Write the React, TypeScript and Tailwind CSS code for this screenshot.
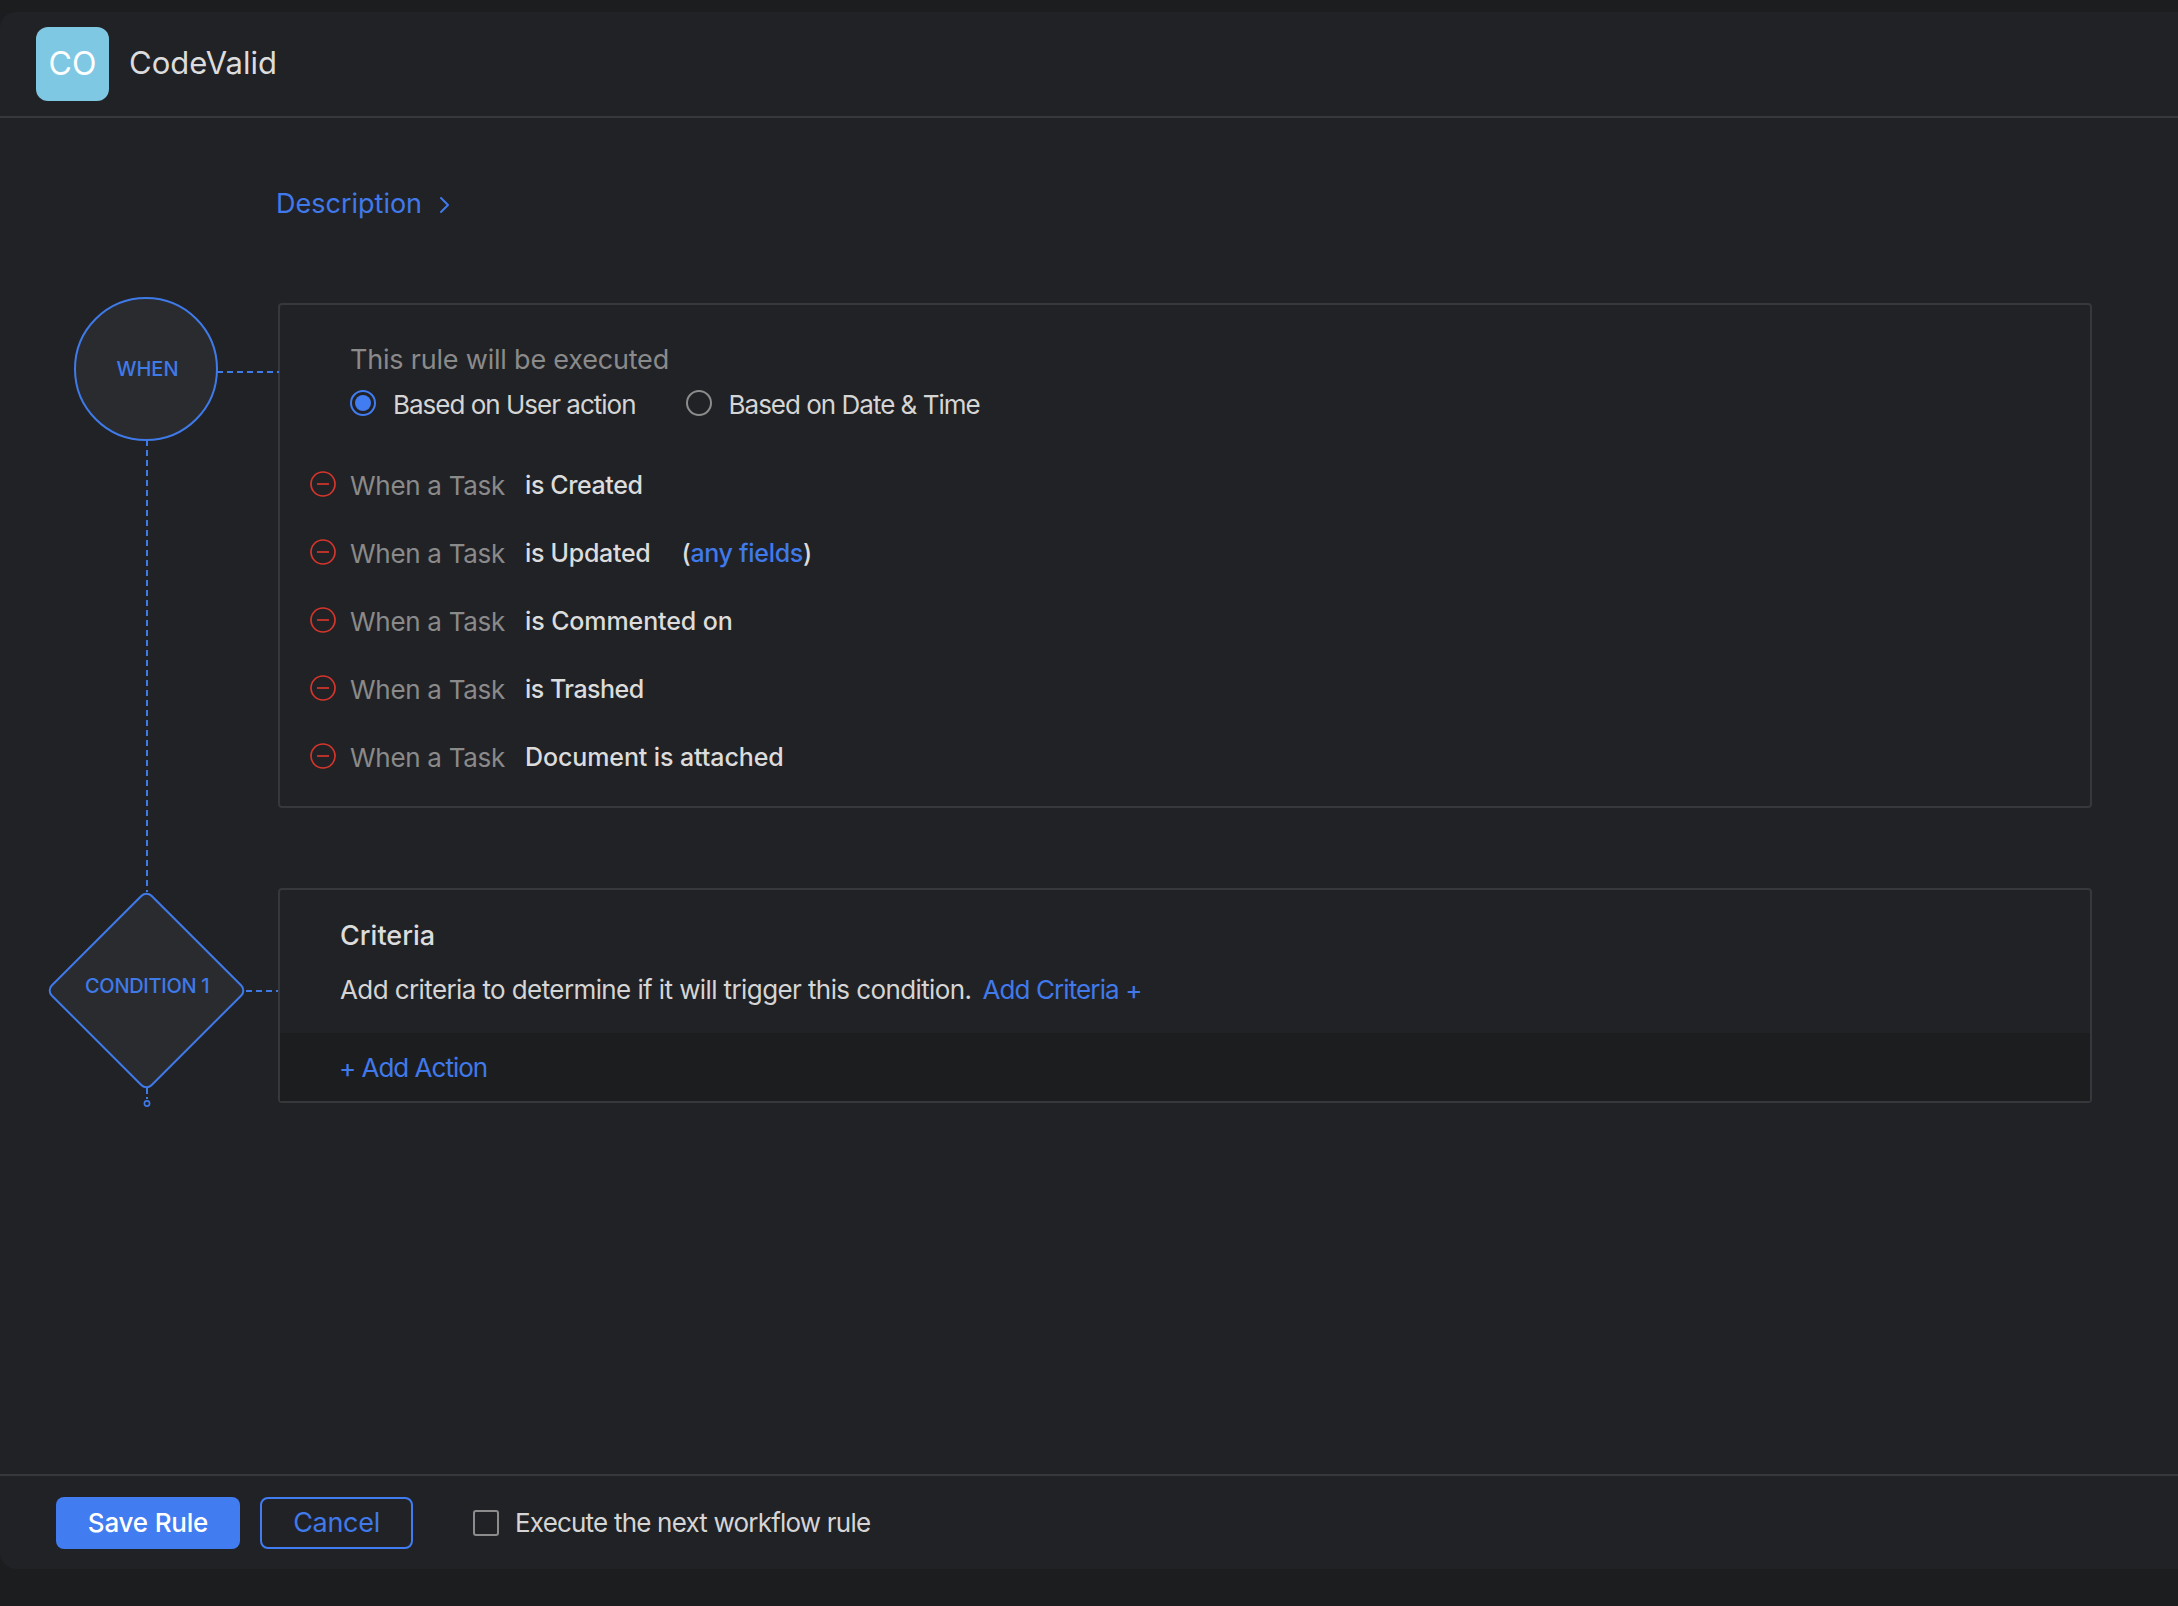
const triggers = [
  { label: 'is Created', tight: 'tracking-[-0.4px]' },
  { label: 'is Updated', tight: 'tracking-[-0.3px]' },
  { label: 'is Commented on', tight: 'tracking-[-0.1px]' },
  { label: 'is Trashed', tight: 'tracking-[-0.5px]' },
  { label: 'Document is attached', tight: 'tracking-[-0.1px]' },
]

function MinusIcon() {
  return (
    <svg width="26" height="26" viewBox="0 0 26 26" fill="none" className="shrink-0">
      <circle cx="13" cy="13" r="12" stroke="#d6352b" strokeWidth="1.7" />
      <path d="M7 13h12" stroke="#d6352b" strokeWidth="1.7" />
    </svg>
  )
}

function DashH({ width }: { width: number }) {
  return (
    <svg width={width} height="2" className="block">
      <path d={`M0 1H${width}`} stroke="#3f7ae9" strokeWidth="2" strokeDasharray="6 4" />
    </svg>
  )
}

export default function App() {
  return (
    <div className="h-[1606px] bg-[#1c1d1f] pt-[12px] pb-[37px] font-[Inter,sans-serif] overflow-hidden">
      <div className="h-full flex flex-col bg-[#212226] rounded-l-[16px]">
        {/* Header */}
        <div className="h-[106px] shrink-0 flex items-center pl-[36px] border-b-2 border-[#37383b]">
          <div className="w-[73px] h-[74px] rounded-[12px] bg-[#7ec8e3] flex items-center justify-center text-white text-[32px]">
            CO
          </div>
          <span className="ml-[20px] -mt-[2px] text-[31px] text-[#dcdcdc]">CodeValid</span>
        </div>

        {/* Rule body */}
        <div className="flex-1">
          <div className="mt-[67px] pl-[276px] h-[38px] flex items-center text-[27px] text-[#4079ea]">
            Description
            <svg width="12" height="20" viewBox="0 0 12 20" fill="none" className="ml-[17px] mt-[2px]">
              <path d="M2 3l7 7-7 7" stroke="#4079ea" strokeWidth="2" strokeLinecap="round" strokeLinejoin="round" />
            </svg>
          </div>

          <div className="mt-[74px] flex">
            {/* Flow nodes */}
            <div className="w-[278px] shrink-0 pl-[48px]">
              <div className="w-[196px] flex flex-col items-center">
                <div className="relative w-[144px] h-[144px] -mb-[1px] rounded-full border-[2.5px] border-[#3f7ae9] bg-[#2a2b2e] flex items-center justify-center pl-[3px] text-[20px] font-medium text-[#3f7ae9]">
                  WHEN
                  <div className="absolute left-full top-[72px] ml-[1px]">
                    <DashH width={62} />
                  </div>
                </div>
                <svg width="2" height="452" className="block ml-[2px]">
                  <path d="M1 0V452" stroke="#3f7ae9" strokeWidth="2" strokeDasharray="6 4" />
                </svg>
                <div className="relative w-[196px] h-[196px] flex items-center justify-center">
                  <div className="w-[143px] h-[143px] rotate-45 rounded-[8px] border-[2.5px] border-[#3f7ae9] bg-[#2a2b2e]" />
                  <span className="absolute left-[37px] top-[79px] text-[20px] font-medium tracking-[-0.3px] text-[#3f7ae9] whitespace-nowrap">
                    CONDITION 1
                  </span>
                  <div className="absolute left-full top-[98px] ml-[2px]">
                    <DashH width={32} />
                  </div>
                </div>
                <svg width="8" height="20" viewBox="0 0 8 20" fill="none" className="block ml-[2px]">
                  <path d="M4 0V11" stroke="#3f7ae9" strokeWidth="2" strokeDasharray="6 3" />
                  <circle cx="4" cy="15.5" r="2.6" stroke="#3f7ae9" strokeWidth="1.6" />
                </svg>
              </div>
            </div>

            {/* Cards */}
            <div className="w-[1814px] shrink-0 pt-[6px]">
              <div className="h-[505px] border-2 border-[#37383b] rounded-[4px] pt-[38px]">
                <div className="pl-[70px] h-[34px] pt-[1px] flex items-center text-[27px] tracking-[-0.2px] text-[#8a8a8a]">
                  This rule will be executed
                </div>
                <div className="mt-[9px] pl-[70px] h-[34px] flex items-center text-[26px] tracking-[-1px] text-[#d5d5d5]">
                  <span className="w-[26px] h-[26px] rounded-full border-2 border-[#417cf0] flex items-center justify-center">
                    <span className="w-[16px] h-[16px] rounded-full bg-[#417cf0]" />
                  </span>
                  <span className="ml-[17px] pt-[3px]">Based on User action</span>
                  <span className="ml-[50px] w-[26px] h-[26px] rounded-full border-[2.5px] border-[#8c8c8c]" />
                  <span className="ml-[17px] pt-[3px]">Based on Date &amp; Time</span>
                </div>
                <div className="mt-[30px] flex flex-col">
                  {triggers.map((t) => (
                    <div key={t.label} className="h-[68px] pl-[30px] flex items-center text-[25px]">
                      <MinusIcon />
                      <span className="ml-[14px] w-[175px] pt-[2px] text-[26px] tracking-[-0.3px] text-[#8a8a8a]">When a Task</span>
                      <span className={`pt-[3px] font-medium text-[#dcdcdc] ${t.tight}`}>{t.label}</span>
                      {t.label === 'is Updated' && (
                        <span className="ml-[31px] pt-[3px] font-medium tracking-[-0.3px] text-[#dcdcdc]">
                          (<span className="text-[#4079ea]">any fields</span>)
                        </span>
                      )}
                    </div>
                  ))}
                </div>
              </div>

              <div className="mt-[80px] border-2 border-[#37383b] rounded-[4px]">
                <div className="pl-[60px] pt-[29px] pb-[27px]">
                  <div className="h-[34px] flex items-center text-[27px] font-medium text-[#dcdcdc]">Criteria</div>
                  <div className="mt-[19px] h-[34px] flex items-center text-[26px] tracking-[-0.6px] text-[#d5d5d5]">
                    Add criteria to determine if it will trigger this condition.
                    <span className="ml-[11px] tracking-[-0.9px] text-[#4079ea]">Add Criteria +</span>
                  </div>
                </div>
                <div className="h-[68px] pl-[59px] flex items-center bg-[#1c1d1f] text-[26px] tracking-[-1px] text-[#4079ea]">
                  + Add Action
                </div>
              </div>
            </div>
          </div>
        </div>

        {/* Footer */}
        <div className="h-[95px] shrink-0 border-t-2 border-[#37383b] pt-[21px] pl-[56px] flex items-start">
          <button className="w-[184px] h-[52px] rounded-[8px] pb-[2px] bg-[#417cf0] text-white text-[26px] tracking-[-0.2px] font-medium">
            Save Rule
          </button>
          <button className="ml-[20px] w-[153px] h-[52px] rounded-[8px] border-2 border-[#417cf0] text-[#4079ea] text-[27px] tracking-[-0.3px]">
            Cancel
          </button>
          <div className="ml-[60px] h-[52px] flex items-center text-[26px] tracking-[-0.8px] text-[#d5d5d5]">
            <span className="w-[26px] h-[26px] rounded-[3px] border-[2.5px] border-[#8c8c8c]" />
            <span className="ml-[16px] pb-[2px]">Execute the next workflow rule</span>
          </div>
        </div>
      </div>
    </div>
  )
}
